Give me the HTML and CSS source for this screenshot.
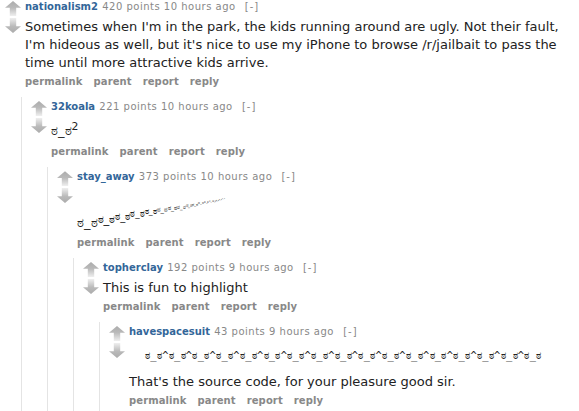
FILE: index.html
```html
<!DOCTYPE html>
<html>
<head>
<meta charset="utf-8">
<link rel="stylesheet" href="styles.css">
</head>
<body>
<div class="thing">
  <div class="comment">
    <div class="midcol"><div class="arrow up"></div><div class="arrow down"></div></div>
    <div class="entry">
      <p class="tagline"><span class="author">nationalism2</span> <span class="score">420 points 10 hours ago</span> <span class="expand">[-]</span></p>
      <div class="md"><p>Sometimes when I'm in the park, the kids running around are ugly. Not their fault, I'm hideous as well, but it's nice to use my iPhone to browse /r/jailbait to pass the time until more attractive kids arrive.</p></div>
      <ul class="buttons"><li>permalink</li><li>parent</li><li>report</li><li>reply</li></ul>
    </div>
  </div>
  <div class="child">
    <div class="thing">
      <div class="comment">
        <div class="midcol"><div class="arrow up"></div><div class="arrow down"></div></div>
        <div class="entry">
          <p class="tagline"><span class="author">32koala</span> <span class="score">221 points 10 hours ago</span> <span class="expand">[-]</span></p>
          <div class="md"><p class="sq">ಠ_ಠ<sup>2</sup></p></div>
          <ul class="buttons"><li>permalink</li><li>parent</li><li>report</li><li>reply</li></ul>
        </div>
      </div>
      <div class="child">
        <div class="thing">
          <div class="comment">
            <div class="midcol"><div class="arrow up"></div><div class="arrow down"></div></div>
            <div class="entry">
              <p class="tagline"><span class="author">stay_away</span> <span class="score">373 points 10 hours ago</span> <span class="expand">[-]</span></p>
              <div class="md"><p class="stack">ಠ_ಠ<sup>ಠ_ಠ<sup>ಠ_ಠ<sup>ಠ_ಠ<sup>ಠ_ಠ<sup>ಠ_ಠ<sup>ಠ_ಠ<sup>ಠ_ಠ<sup>ಠ_ಠ<sup>ಠ_ಠ<sup>ಠ_ಠ<sup>ಠ_ಠ<sup>ಠ_ಠ<sup>ಠ_ಠ<sup>ಠ_ಠ<sup>ಠ_ಠ<sup>ಠ_ಠ</sup></sup></sup></sup></sup></sup></sup></sup></sup></sup></sup></sup></sup></sup></sup></sup></p></div>
              <ul class="buttons"><li>permalink</li><li>parent</li><li>report</li><li>reply</li></ul>
            </div>
          </div>
          <div class="child">
            <div class="thing">
              <div class="comment">
                <div class="midcol"><div class="arrow up"></div><div class="arrow down"></div></div>
                <div class="entry">
                  <p class="tagline"><span class="author">topherclay</span> <span class="score">192 points 9 hours ago</span> <span class="expand">[-]</span></p>
                  <div class="md"><p>This is fun to highlight</p></div>
                  <ul class="buttons"><li>permalink</li><li>parent</li><li>report</li><li>reply</li></ul>
                </div>
              </div>
              <div class="child">
                <div class="thing">
                  <div class="comment">
                    <div class="midcol"><div class="arrow up"></div><div class="arrow down"></div></div>
                    <div class="entry">
                      <p class="tagline"><span class="author">havespacesuit</span> <span class="score">43 points 9 hours ago</span> <span class="expand">[-]</span></p>
                      <div class="md"><pre class="code">ಠ_ಠ^ಠ_ಠ^ಠ_ಠ^ಠ_ಠ^ಠ_ಠ^ಠ_ಠ^ಠ_ಠ^ಠ_ಠ^ಠ_ಠ^ಠ_ಠ^ಠ_ಠ^ಠ_ಠ^ಠ_ಠ^ಠ_ಠ^ಠ_ಠ^ಠ_ಠ^ಠ_ಠ</pre><p>That's the source code, for your pleasure good sir.</p></div>
                      <ul class="buttons"><li>permalink</li><li>parent</li><li>report</li><li>reply</li></ul>
                    </div>
                  </div>
                </div>
              </div>
            </div>
          </div>
        </div>
      </div>
    </div>
  </div>
</div>
</body>
</html>
```

FILE: styles.css
```css
html, body {
  margin: 0;
  padding: 0;
  background: #fff;
  overflow: hidden;
  height: 411px;
}
body {
  font-family: Verdana, "DejaVu Sans", sans-serif;
  color: #222;
}
.comment {
  display: flex;
}
.midcol {
  flex: none;
  width: 25px;
  box-sizing: border-box;
  padding: 1px 0 0 5px;
  display: flex;
  flex-direction: column;
  gap: 2px;
}
.arrow {
  width: 16px;
  height: 15px;
  clip-path: polygon(50% 0, 100% 45%, 70% 45%, 70% 100%, 30% 100%, 30% 45%, 0 45%);
  background: linear-gradient(#acacac 0%, #bababa 45%, #efefef 100%);
}
.arrow.down {
  transform: scaleY(-1);
}
.entry {
  flex: 1;
  min-width: 0;
  padding-right: 3px;
}
.tagline {
  margin: 0;
  font-size: 10px;
  line-height: 14px;
  color: #888;
}
.author {
  color: #369;
  font-weight: bold;
  margin-right: 1px;
}
.score {
  letter-spacing: 0.5px;
}
.expand {
  margin-left: 6px;
  letter-spacing: 1px;
}
.md {
  margin-top: 4px;
  font-size: 13px;
  line-height: 18px;
  color: #222;
}
.md p {
  margin: 0;
}
.sq {
  padding-bottom: 2px;
}
.stack {
  padding: 10px 0 1px;
}
.stack sup {
  font-size: 0.88em;
  line-height: 1.1;
  vertical-align: 0.33em;
}
.code {
  margin: 9px 0 11px 16px;
  font-family: "DejaVu Sans Mono", monospace;
  font-size: 10.4px;
  letter-spacing: 0.3px;
  line-height: 14px;
  color: #222;
}
.buttons {
  margin: 4px 0 0;
  padding: 0;
  list-style: none;
  display: flex;
  gap: 11px;
  font-size: 10px;
  line-height: 12px;
  font-weight: bold;
  color: #888;
  letter-spacing: 0.1px;
}
.child {
  margin: 9px 0 0 21px;
  padding: 3px 0 600px 4px;
  border-left: 1px solid #e4e4e4;
}
```
